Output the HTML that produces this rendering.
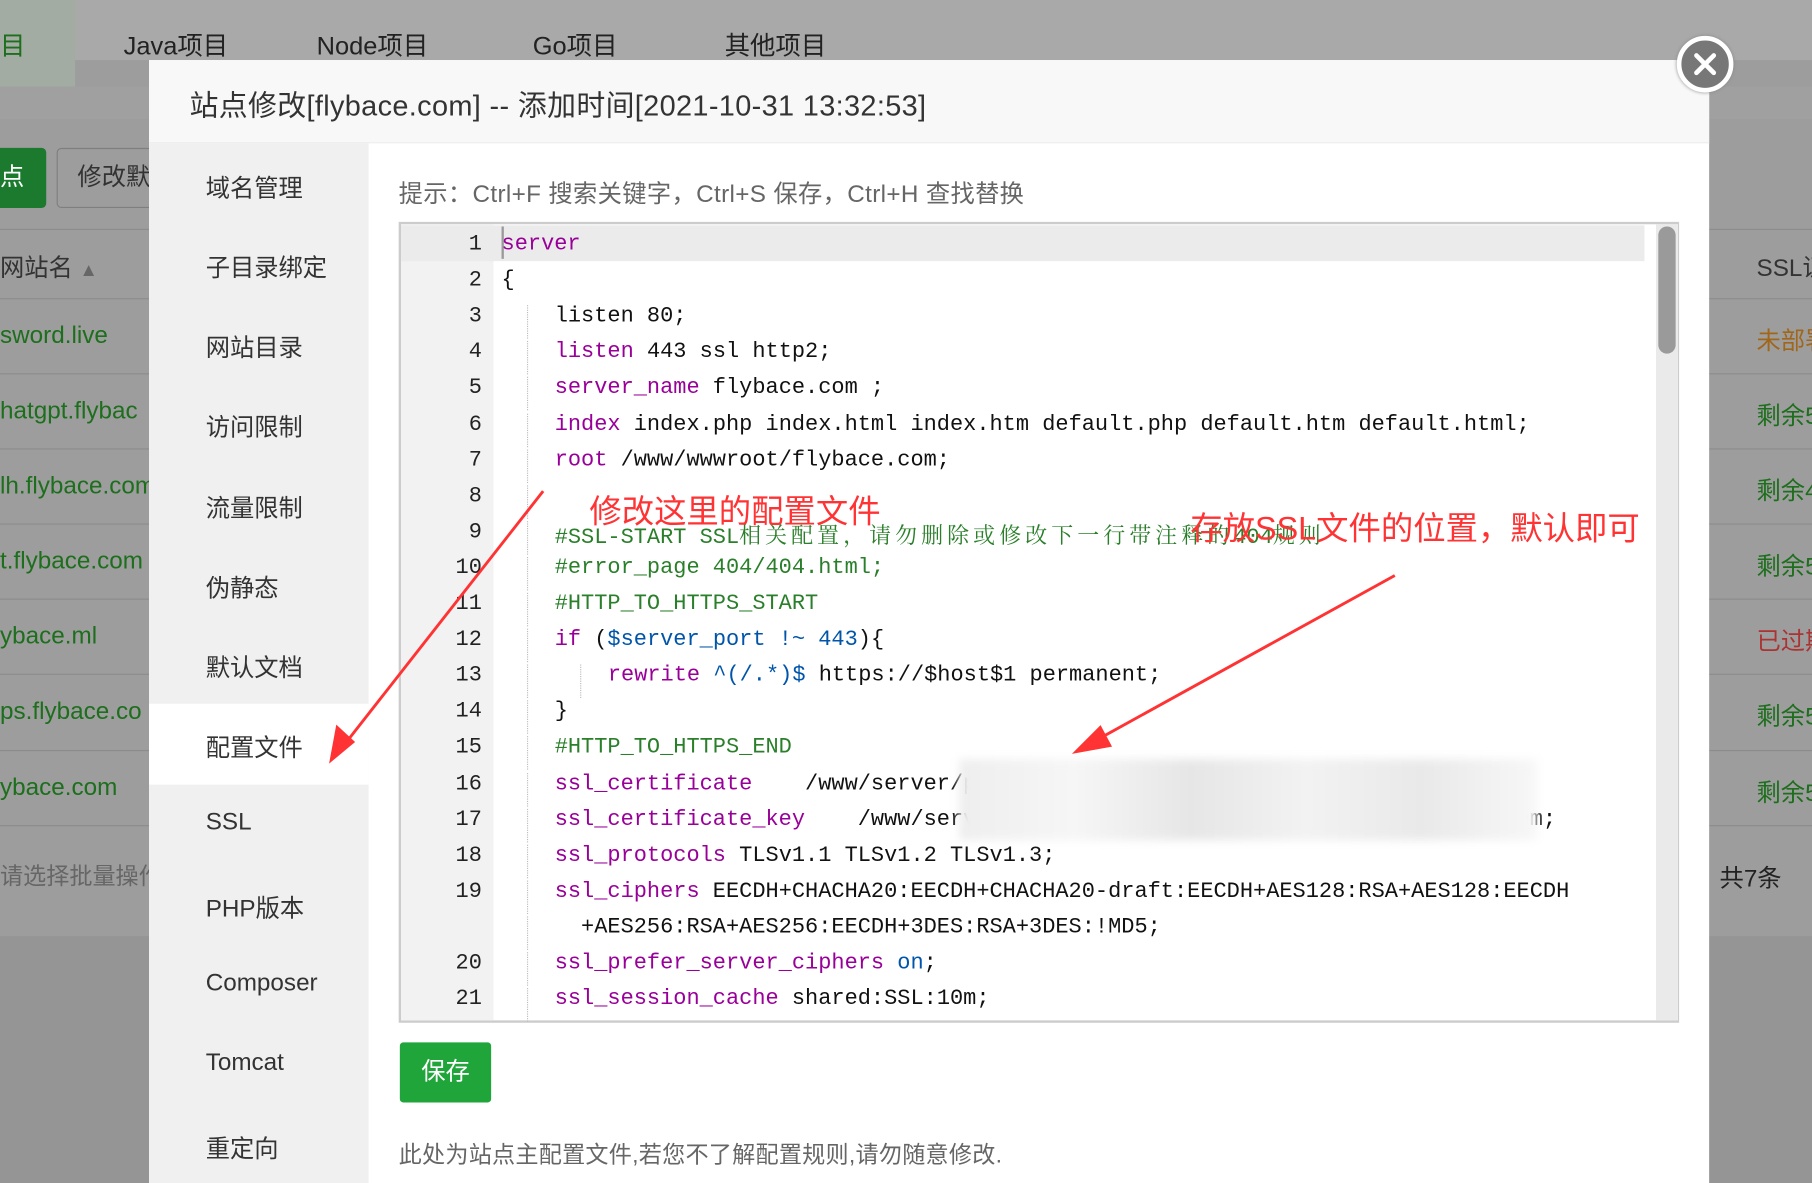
<!DOCTYPE html>
<html><head><meta charset="utf-8"><style>
*{margin:0;padding:0;box-sizing:border-box}
body{width:1812px;height:1183px;overflow:hidden;background:#9a9a9a;font-family:"Liberation Sans","Noto Sans CJK SC",sans-serif}
#w{position:absolute;left:0;top:0;width:1568px;height:1024px;transform:scale(1.15561);transform-origin:0 0;background:#9d9d9d;overflow:hidden}
.a{position:absolute;white-space:nowrap}
.nav{font-size:22px;color:#222;top:22px}
.row{position:absolute;left:0;width:1568px;border-top:1px solid #8c8c8c}
.g{color:#1d6e1d;font-size:21px}
.menu{position:absolute;left:178px;font-size:21px;color:#333}
.code{position:absolute;left:0;font-family:"Liberation Mono","Noto Sans CJK SC",monospace;font-size:19px;color:#111;white-space:pre}
.ln{position:absolute;width:70px;left:347px;text-align:right;font-family:"Liberation Mono",monospace;font-size:19px;color:#222}
.k{color:#909}.b{color:#05a}.c{color:#2a7f2a}
.cj{letter-spacing:3.5px;font-family:"Noto Serif CJK SC",serif}
.guide{position:absolute;width:0;border-left:1px dotted #bbb}
</style></head><body><div id="w">
<div class="a" style="left:0;top:0;width:1568px;height:52px;background:#a9a9a9"></div>
<div class="a" style="left:0;top:0;width:65px;height:75px;background:#a3aca3"></div>
<div class="a nav" style="left:0;color:#1d6e1d">目</div>
<div class="a nav" style="left:107px">Java项目</div>
<div class="a nav" style="left:274px">Node项目</div>
<div class="a nav" style="left:461px">Go项目</div>
<div class="a nav" style="left:627px">其他项目</div>
<div class="a" style="left:0;top:75px;width:1568px;height:28px;background:#a0a0a0"></div>
<div class="a" style="left:0;top:128px;width:40px;height:52px;background:#1c7a2e;border-radius:0 4px 4px 0;color:#fff;font-size:21px;line-height:52px">点</div>
<div class="a" style="left:49px;top:128px;width:100px;height:52px;border:1px solid #7f7f7f;border-radius:4px;color:#333;font-size:21px;line-height:50px;padding-left:17px">修改默</div>
<div class="row" style="top:198px"></div>
<div class="a" style="left:0;top:216px;font-size:21px;color:#333">网站名 <span style="font-size:16px;color:#666">▲</span></div>
<div class="a" style="left:1520px;top:216px;font-size:21px;color:#333">SSL证</div>
<div class="row" style="top:258px"></div><div class="row" style="top:323px"></div><div class="row" style="top:388px"></div><div class="row" style="top:453px"></div><div class="row" style="top:518px"></div><div class="row" style="top:583px"></div><div class="row" style="top:649px"></div><div class="row" style="top:714px"></div>
<div class="a g" style="left:0;top:279px">sword.live</div>
<div class="a g" style="left:0;top:344px">hatgpt.flybac</div>
<div class="a g" style="left:0;top:409px">lh.flybace.com</div>
<div class="a g" style="left:0;top:474px">t.flybace.com</div>
<div class="a g" style="left:0;top:539px">ybace.ml</div>
<div class="a g" style="left:0;top:604px">ps.flybace.co</div>
<div class="a g" style="left:0;top:670px">ybace.com</div>
<div class="a" style="left:0;top:742px;font-size:20px;color:#666">请选择批量操作</div>
<div class="a" style="left:1520px;top:279px;font-size:21px;color:#a0661a">未部署</div>
<div class="a g" style="left:1520px;top:344px">剩余5</div>
<div class="a g" style="left:1520px;top:409px">剩余4</div>
<div class="a g" style="left:1520px;top:474px">剩余5</div>
<div class="a" style="left:1520px;top:539px;font-size:21px;color:#a33">已过期</div>
<div class="a g" style="left:1520px;top:604px">剩余5</div>
<div class="a g" style="left:1520px;top:670px">剩余5</div>
<div class="a" style="left:1488px;top:744px;font-size:21px;color:#222">共7条</div>
<div class="a" style="left:0;top:810px;width:1568px;height:214px;background:#959595"></div>

<div class="a" style="left:129px;top:52px;width:1350px;height:980px;background:#fff"></div>
<div class="a" style="left:129px;top:52px;width:1350px;height:72px;background:#f8f8f8;border-bottom:1px solid #eee"></div>
<div class="a" style="left:164px;top:72px;font-size:25px;color:#333;letter-spacing:0.3px">站点修改[flybace.com] -- 添加时间[2021-10-31 13:32:53]</div>
<div class="a" style="left:129px;top:124px;width:190px;height:900px;background:#f0f0f0"></div>
<div class="a" style="left:129px;top:609px;width:190px;height:70px;background:#fff"></div>
<div class="menu" style="top:147px">域名管理</div>
<div class="menu" style="top:216px">子目录绑定</div>
<div class="menu" style="top:285px">网站目录</div>
<div class="menu" style="top:354px">访问限制</div>
<div class="menu" style="top:424px">流量限制</div>
<div class="menu" style="top:493px">伪静态</div>
<div class="menu" style="top:562px">默认文档</div>
<div class="menu" style="top:631px">配置文件</div>
<div class="menu" style="top:700px">SSL</div>
<div class="menu" style="top:770px">PHP版本</div>
<div class="menu" style="top:839px">Composer</div>
<div class="menu" style="top:908px">Tomcat</div>
<div class="menu" style="top:978px">重定向</div>
<div class="a" style="left:345px;top:152px;font-size:21px;color:#666;letter-spacing:0.3px">提示：Ctrl+F 搜索关键字，Ctrl+S 保存，Ctrl+H 查找替换</div>

<div class="a" style="left:345px;top:192px;width:1108px;height:693px;border:2px solid #ccc;border-right-width:1px;background:#fff;overflow:hidden">
 <div class="a" style="left:0;top:0;width:80px;height:693px;background:#f2f2f2"></div>
 <div class="a" style="left:0;top:1px;width:1076px;height:31px;background:#ebebeb"></div>
 <div class="a" style="left:87px;top:2px;width:2px;height:28px;background:#999"></div>
 <div class="a" style="left:1086px;top:0;width:20px;height:693px;background:#eaeaea"></div>
 <div class="a" style="left:1088px;top:2px;width:15px;height:110px;background:#9a9a9a;border-radius:8px"></div>
</div>
<div id="code" class="a" style="left:0;top:0"></div>

<div class="a" style="left:346px;top:902px;width:79px;height:52px;background:#20a53a;border-radius:3px;color:#fff;font-size:21px;line-height:52px;text-align:center">保存</div>
<div class="a" style="left:345px;top:983px;font-size:20px;color:#666;letter-spacing:0.2px">此处为站点主配置文件,若您不了解配置规则,请勿随意修改.</div>

<div class="a" style="left:830px;top:657px;width:500px;height:70px;background:linear-gradient(90deg,#eee,#f6f6f6 20%,#e6e6e6 40%,#f2f2f2 60%,#e9e9e9 80%,#f7f7f7);filter:blur(4px)"></div>

<div class="a" style="left:1451px;top:31px;width:49px;height:49px;border-radius:50%;background:#777;border:4px solid #fff;box-shadow:0 0 3px #888"></div>
<svg class="a" style="left:1451px;top:31px" width="49" height="49"><path d="M17 17L32 32M32 17L17 32" stroke="#fff" stroke-width="4" stroke-linecap="round"/></svg>

<svg class="a" style="left:0;top:0" width="1568" height="1024"><path d="M470 425L292 652" stroke="#f33" stroke-width="2.5"/><path d="M287 657L292 630L305 642Z" fill="#f33" stroke="#f33" stroke-width="3"/><path d="M1207 498L937 647" stroke="#f33" stroke-width="2.5"/><path d="M932 650L952 630L960 645Z" fill="#f33" stroke="#f33" stroke-width="3"/></svg>
<div class="a" style="left:510px;top:421px;font-size:28px;color:#f33">修改这里的配置文件</div>
<div class="a" style="left:1030px;top:436px;font-size:28px;color:#f33">存放SSL文件的位置，默认即可</div>
</div>
<script>
var L=[[0,'<span class=k>server</span>'],[0,'{'],[1,'listen 80;'],[1,'<span class=k>listen</span> 443 ssl http2;'],[1,'<span class=k>server_name</span> flybace.com ;'],[1,'<span class=k>index</span> index.php index.html index.htm default.php default.htm default.html;'],[1,'<span class=k>root</span> /www/wwwroot/flybace.com;'],[1,''],[1,'<span class=c>#SSL-START SSL<span class=cj>相关配置，请勿删除或修改下一行带注释的</span>404<span class=cj>规则</span></span>'],[1,'<span class=c>#error_page 404/404.html;</span>'],[1,'<span class=c>#HTTP_TO_HTTPS_START</span>'],[1,'<span class=k>if</span> (<span class=b>$server_port !~ 443</span>){'],[2,'<span class=k>rewrite</span> <span class=b>^(/.*)$</span> https://$host$1 permanent;'],[1,'}'],[1,'<span class=c>#HTTP_TO_HTTPS_END</span>'],[1,'<span class=k>ssl_certificate</span>    /www/server/panel/vhost/cert/flybace.com/fullchain.pem;'],[1,'<span class=k>ssl_certificate_key</span>    /www/server/panel/vhost/cert/flybace.com/privkey.pem;'],[1,'<span class=k>ssl_protocols</span> TLSv1.1 TLSv1.2 TLSv1.3;'],[1,'<span class=k>ssl_ciphers</span> EECDH+CHACHA20:EECDH+CHACHA20-draft:EECDH+AES128:RSA+AES128:EECDH'],[-1,'  +AES256:RSA+AES256:EECDH+3DES:RSA+3DES:!MD5;'],[1,'<span class=k>ssl_prefer_server_ciphers</span> <span class=b>on</span>;'],[1,'<span class=k>ssl_session_cache</span> shared:SSL:10m;']];
var h='',n=1;
for(var i=0;i<L.length;i++){var y=200+i*31.1,d=L[i][0];
 if(d>=0){h+='<div class=ln style="top:'+y+'px">'+n+'</div>';n++;}
 var ind=d<0?1:d;var x=434+ind*46;
 if(ind>=1)h+='<div class=guide style="left:456px;top:'+(y+2)+'px;height:29px"></div>';
 if(ind>=2)h+='<div class=guide style="left:502px;top:'+(y+2)+'px;height:29px"></div>';
 if(d<0)x=480;
 if(L[i][1])h+='<div class=code style="left:'+x+'px;top:'+y+'px">'+L[i][1]+'</div>';}
document.getElementById('code').innerHTML=h;
</script>
</body></html>
